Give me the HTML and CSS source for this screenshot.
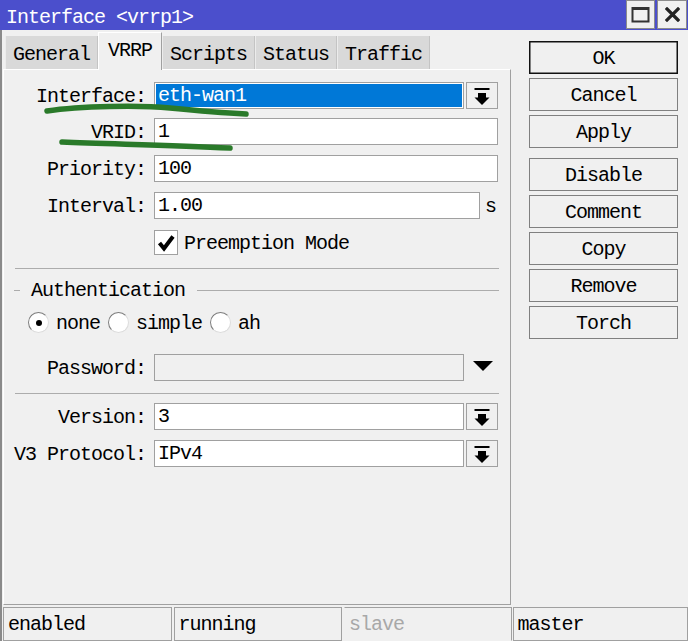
FILE: index.html
```html
<!DOCTYPE html>
<html>
<head>
<meta charset="utf-8">
<link rel="stylesheet" href="styles.css">
</head>
<body>
<div class="window">
  <div class="titlebar">
    <span class="title">Interface &lt;vrrp1&gt;</span>
    <div class="winbtns">
      <div class="winbtn"><svg width="19" height="17" viewBox="0 0 19 17"><rect x="1.5" y="2" width="16" height="13.5" fill="none" stroke="#333" stroke-width="2"/><rect x="1" y="1" width="17" height="3" fill="#333"/></svg></div>
      <div class="winbtn close"><svg width="15" height="15" viewBox="0 0 15 15"><path d="M2 2 L13 13 M13 2 L2 13" stroke="#222" stroke-width="3.2" stroke-linecap="square"/></svg></div>
    </div>
  </div>
  <div class="main">
    <div class="content">
      <div class="left">
        <div class="tabs">
          <div class="tab">General</div>
          <div class="tab active">VRRP</div>
          <div class="tab">Scripts</div>
          <div class="tab">Status</div>
          <div class="tab">Traffic</div>
        </div>
        <div class="panel">
          <div class="row">
            <div class="label">Interface:</div>
            <div class="field short selected"><span class="sel">eth-wan1</span></div>
            <div class="dropbtn"><svg width="16" height="17" viewBox="0 0 16 17"><rect x="0.5" y="0" width="15" height="2" fill="#000"/><rect x="4" y="5" width="8" height="5" fill="#000"/><polygon points="0.5,9.5 15.5,9.5 8,17" fill="#000"/></svg></div>
          </div>
          <div class="row">
            <div class="label">VRID:</div>
            <div class="field">1</div>
          </div>
          <div class="row">
            <div class="label">Priority:</div>
            <div class="field">100</div>
          </div>
          <div class="row">
            <div class="label">Interval:</div>
            <div class="field interval">1.00</div>
            <span class="unit">s</span>
          </div>
          <div class="checkrow">
            <div class="checkbox"><svg width="20" height="20" viewBox="0 0 20 20"><path d="M3.5 10 L8 15.5 L17 3.5" fill="none" stroke="#000" stroke-width="4"/></svg></div>
            <span class="checklabel">Preemption Mode</span>
          </div>
          <div class="sep first"></div>
          <div class="legend">
            <div class="dash"></div>
            <span class="legendtext">Authentication</span>
            <div class="legendline"></div>
          </div>
          <div class="radios">
            <div class="radio on"></div><span class="rlabel">none</span>
            <div class="radio"></div><span class="rlabel">simple</span>
            <div class="radio"></div><span class="rlabel">ah</span>
          </div>
          <div class="row password">
            <div class="label">Password:</div>
            <div class="field short disabled"></div>
            <svg class="tri" width="20" height="10" viewBox="0 0 20 10"><polygon points="0,0 20,0 10,10" fill="#000"/></svg>
          </div>
          <div class="sep second"></div>
          <div class="row version">
            <div class="label">Version:</div>
            <div class="field short">3</div>
            <div class="dropbtn"><svg width="16" height="17" viewBox="0 0 16 17"><rect x="0.5" y="0" width="15" height="2" fill="#000"/><rect x="4" y="5" width="8" height="5" fill="#000"/><polygon points="0.5,9.5 15.5,9.5 8,17" fill="#000"/></svg></div>
          </div>
          <div class="row">
            <div class="label">V3 Protocol:</div>
            <div class="field short">IPv4</div>
            <div class="dropbtn"><svg width="16" height="17" viewBox="0 0 16 17"><rect x="0.5" y="0" width="15" height="2" fill="#000"/><rect x="4" y="5" width="8" height="5" fill="#000"/><polygon points="0.5,9.5 15.5,9.5 8,17" fill="#000"/></svg></div>
          </div>
        </div>
      </div>
      <div class="right">
        <div class="btn default">OK</div>
        <div class="btn">Cancel</div>
        <div class="btn">Apply</div>
        <div class="btn group">Disable</div>
        <div class="btn">Comment</div>
        <div class="btn">Copy</div>
        <div class="btn">Remove</div>
        <div class="btn">Torch</div>
      </div>
    </div>
    <div class="statusbar">
      <div class="cell c1">enabled</div>
      <div class="cell c2">running</div>
      <div class="cell c3 dim">slave</div>
      <div class="cell c4">master</div>
    </div>
  </div>
  <svg class="scribble" width="688" height="641" viewBox="0 0 688 641">
    <path d="M47 111 C 80 106, 140 105, 170 108 S 225 113, 246 114" fill="none" stroke="#2a7a2a" stroke-width="5.5" stroke-linecap="round"/>
    <path d="M62 142 C 110 144, 170 145, 230 148" fill="none" stroke="#2a7a2a" stroke-width="5.5" stroke-linecap="round"/>
  </svg>
</div>
</body>
</html>
```
FILE: styles.css
```css
html, body {
  margin: 0;
  padding: 0;
  background: #f0f0f0;
}
.window {
  position: relative;
  width: 688px;
  height: 641px;
  display: flex;
  flex-direction: column;
  background: #f0f0f0;
  overflow: hidden;
  font-family: "Liberation Mono", monospace;
  font-size: 20px;
  letter-spacing: -1px;
  color: #000;
}
.titlebar {
  height: 30px;
  flex-shrink: 0;
  background: #4b4fcc;
  display: flex;
  align-items: center;
  padding-left: 6px;
}
.title {
  color: #fff;
  flex: 1;
  padding-top: 5px;
}
.winbtns {
  display: flex;
  align-self: flex-start;
  gap: 2px;
  margin-right: 1px;
}
.winbtn {
  width: 29px;
  height: 29px;
  box-sizing: border-box;
  background: #f0f0f0;
  border: 1px solid #8c8c8c;
  display: flex;
  align-items: center;
  justify-content: center;
}
.winbtn.close {
  width: 30px;
}
.main {
  flex: 1;
  display: flex;
  flex-direction: column;
  border-left: 2px solid #8a8a8a;
}
.content {
  flex: 1;
  display: flex;
}
.left {
  width: 508px;
  margin-left: 1px;
  display: flex;
  flex-direction: column;
}
.tabs {
  height: 39px;
  display: flex;
  align-items: flex-end;
  padding-left: 2px;
}
.tab {
  height: 33px;
  box-sizing: border-box;
  background: #d9d9d9;
  padding: 3px 7px 0;
  border-left: 1px solid #ececec;
  border-right: 1px solid #c4c4c4;
  display: flex;
  align-items: center;
}
.tab.active {
  height: 38px;
  background: #f0f0f0;
  padding: 0 9px 2px;
  border-top: 1px solid #fff;
  border-left: 1px solid #fff;
  border-right: 1px solid #a0a0a0;
  margin-bottom: -1px;
  position: relative;
  z-index: 1;
}
.panel {
  flex: 1;
  border-top: 1px solid #fff;
  border-left: 1px solid #fff;
  border-right: 1px solid #a0a0a0;
  border-bottom: 1px solid #a0a0a0;
  padding-top: 12px;
}
.row {
  display: flex;
  align-items: center;
  height: 27px;
  margin-bottom: 10px;
}
.row:first-child {
  margin-bottom: 9px;
}
.label {
  width: 142px;
  flex-shrink: 0;
  text-align: right;
  margin-right: 8px;
  padding-top: 1px;
}
.field {
  width: 344px;
  height: 27px;
  box-sizing: border-box;
  border: 1px solid #a0a0a0;
  background: #fff;
  padding-left: 3px;
  line-height: 26px;
}
.field.short {
  width: 310px;
}
.field.interval {
  width: 326px;
}
.field.selected {
  padding: 1px;
  line-height: 24px;
}
.sel {
  display: block;
  height: 23px;
  background: #0078d7;
  color: #fff;
  padding-left: 2px;
}
.field.disabled {
  background: #f0f0f0;
}
.unit {
  margin-left: 5px;
  padding-top: 2px;
}
.dropbtn {
  width: 32px;
  height: 27px;
  box-sizing: border-box;
  margin-left: 2px;
  border: 1px solid #a0a0a0;
  background: #f0f0f0;
  display: flex;
  align-items: center;
  justify-content: center;
  padding-top: 1px;
}
.checkrow {
  display: flex;
  align-items: center;
  padding-left: 150px;
  margin-top: 11px;
  height: 25px;
}
.checkbox {
  width: 24px;
  height: 25px;
  box-sizing: border-box;
  border: 1px solid #a0a0a0;
  background: #fff;
  display: flex;
  align-items: center;
  justify-content: center;
}
.checklabel {
  margin-left: 6px;
  padding-top: 2px;
}
.sep {
  margin-left: 11px;
  width: 484px;
  border-top: 1px solid #acacac;
}
.sep.first {
  margin-top: 13px;
}
.sep.second {
  margin-top: 12px;
}
.legend {
  display: flex;
  align-items: center;
  margin-left: 10px;
  width: 485px;
  height: 24px;
  margin-top: 9px;
}
.dash {
  width: 6px;
  border-top: 1px solid #acacac;
}
.legendtext {
  margin-left: 11px;
}
.legendline {
  flex: 1;
  margin-left: 12px;
  border-top: 1px solid #acacac;
}
.radios {
  display: flex;
  align-items: center;
  padding-left: 24px;
  margin-top: 10px;
  height: 21px;
}
.radio {
  width: 21px;
  height: 21px;
  box-sizing: border-box;
  border-radius: 50%;
  background: #fff;
  border: 1px solid;
  border-color: #7c7c7c #dcdcdc #dcdcdc #7c7c7c;
  display: flex;
  align-items: center;
  justify-content: center;
}
.radio.on::after {
  content: "";
  width: 6px;
  height: 6px;
  border-radius: 50%;
  background: #000;
}
.rlabel {
  margin-left: 7px;
  margin-right: 8px;
  padding-top: 2px;
}
.row.password {
  margin-top: 21px;
  margin-bottom: 0;
}
.tri {
  margin-left: 9px;
  margin-top: -3px;
}
.row.version {
  margin-top: 9px;
}
.right {
  width: 149px;
  margin-left: 18px;
  padding-top: 11px;
  display: flex;
  flex-direction: column;
  gap: 4px;
}
.btn {
  height: 33px;
  box-sizing: border-box;
  border: 1px solid #808080;
  background: #f0f0f0;
  display: flex;
  align-items: center;
  justify-content: center;
  padding-top: 2px;
}
.btn.default {
  border: 1px solid #111;
  box-shadow: inset 0 0 0 0.5px #111;
}
.btn.group {
  margin-top: 6px;
}
.statusbar {
  height: 36px;
  flex-shrink: 0;
  box-sizing: border-box;
  padding: 2px 0 0 1px;
  display: flex;
  gap: 2px;
}
.cell {
  height: 34px;
  box-sizing: border-box;
  border: 1px solid #a0a0a0;
  padding-left: 4px;
  line-height: 34px;
}
.c1 { width: 169px; }
.c2 { width: 169px; }
.c3 { width: 168px; border-left-color: #f0f0f0; border-bottom-color: #f0f0f0; }
.c4 { width: 176px; margin-left: -1px; }
.dim { color: #a8a8a8; }
.scribble {
  position: absolute;
  left: 0;
  top: 0;
  pointer-events: none;
}
```
